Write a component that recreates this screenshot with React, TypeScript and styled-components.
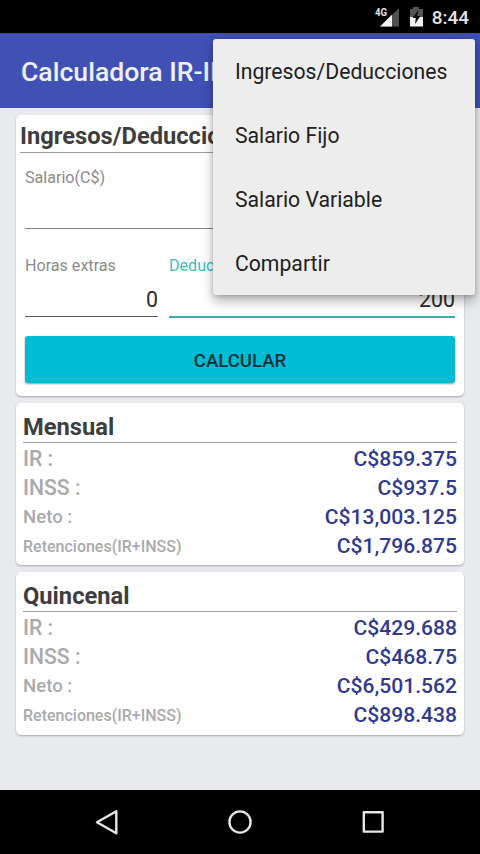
import React from "react";
import styled, { createGlobalStyle } from "styled-components";

const GlobalStyle = createGlobalStyle`
  * { box-sizing: border-box; }
  body { margin: 0; font-family: Roboto, sans-serif; background: #000; }
`;

const Screen = styled.div`
  position: relative;
  width: 480px;
  height: 854px;
  display: flex;
  flex-direction: column;
  overflow: hidden;
  background: #e8eaee;
`;

const StatusBar = styled.header`
  height: 33px;
  flex: none;
  display: flex;
  justify-content: flex-end;
  align-items: center;
  padding-right: 11px;
  background: #000;
`;

const Clock = styled.span`
  margin-left: 9px;
  font-size: 18.9px;
  font-weight: 500;
  line-height: 33px;
  padding-top: 2px;
  color: #e4e4e4;
`;

const Network = styled.text`
  font: 700 11px Roboto, sans-serif;
  fill: #e2e2e2;
`;

const AppBar = styled.div`
  height: 75px;
  flex: none;
  display: flex;
  align-items: center;
  padding-left: 21px;
  background: #4050b3;
  border-top: 1px solid #3e4ba0;
`;

const AppTitle = styled.h1`
  margin: 0;
  font-size: 26.6px;
  font-weight: 500;
  white-space: nowrap;
  color: #eef0fc;
`;

const Content = styled.main`
  flex: 1;
  display: flex;
  flex-direction: column;
  gap: 7px;
  padding: 7px 16px 0;
`;

const Card = styled.section<{ $height: number; $form?: boolean }>`
  height: ${(p) => p.$height}px;
  padding: ${(p) => (p.$form ? "6px 4px 0" : "8px 7px 0")};
  background: #fff;
  border-radius: 5px;
  box-shadow: 0 1px 2px rgba(50, 50, 75, 0.38);
`;

const CardTitle = styled.h2<{ $lineHeight: number }>`
  margin: 0;
  height: 32px;
  line-height: ${(p) => p.$lineHeight}px;
  font-size: 23.7px;
  font-weight: 700;
  color: #3e3e3e;
  border-bottom: 1px solid #9c9c9c;
`;

const Form = styled.div`
  padding: 0 5px;
  display: flex;
  flex-direction: column;
`;

const FieldRow = styled.div`
  display: flex;
  gap: 11px;
  margin-top: 27px;
`;

const Field = styled.label<{ $width?: number; $active?: boolean }>`
  ${(p) => (p.$width ? `width: ${p.$width}px;` : "flex: 1;")}
  display: flex;
  flex-direction: column;
  font-size: 16.1px;
  line-height: 20px;
  white-space: nowrap;
  color: ${(p) => (p.$active ? "#35bfc7" : "#8b8b8b")};
`;

const SalaryField = styled(Field)`
  flex: none;
  margin-top: 15px;
`;

const FieldValue = styled.span<{ $height: number; $line: string }>`
  height: ${(p) => p.$height}px;
  padding-top: 10px;
  line-height: 27px;
  text-align: right;
  font-size: 21.3px;
  color: #2b2b2b;
  border-bottom: ${(p) => p.$line};
`;

const Calculate = styled.button`
  height: 47px;
  margin-top: 18px;
  padding: 2px 0 0;
  border: 0;
  border-radius: 3px;
  background: #00bcd5;
  box-shadow: 0 1px 2px rgba(0, 0, 0, 0.4);
  color: #13323a;
  font: 500 18.6px Roboto, sans-serif;
`;

const ResultRow = styled.div`
  height: 29px;
  display: flex;
  justify-content: space-between;
  align-items: center;
`;

const ResultLabel = styled.span<{ $size: number }>`
  padding-top: ${(p) => (p.$size < 18 ? 2 : 0)}px;
  font-size: ${(p) => p.$size}px;
  font-weight: 500;
  color: #aaa;
`;

const ResultValue = styled.span`
  font-size: 21.1px;
  font-weight: 500;
  color: #303a8f;
`;

const Results = styled.div<{ $gap: number }>`
  padding-top: ${(p) => p.$gap}px;
`;

const Menu = styled.nav`
  position: absolute;
  left: 213px;
  top: 39px;
  width: 262px;
  height: 256px;
  display: flex;
  flex-direction: column;
  background: #ededed;
  border-radius: 3px;
  box-shadow: 0 7px 12px rgba(0, 0, 0, 0.26), 0 1px 5px rgba(0, 0, 0, 0.22);
`;

const MenuItem = styled.a`
  height: 64px;
  padding: 0 22px;
  line-height: 65px;
  font-size: 21.2px;
  color: #212121;
`;

const NavBar = styled.footer`
  height: 64px;
  flex: none;
  display: flex;
  justify-content: space-between;
  align-items: center;
  padding: 0 91px;
  background: #000;
`;

const labelSizes = [21.2, 21.2, 18.6, 16];
const labels = ["IR :", "INSS :", "Neto :", "Retenciones(IR+INSS)"];
const menuItems = ["Ingresos/Deducciones", "Salario Fijo", "Salario Variable", "Compartir"];

interface ResultCardProps {
  title: string;
  values: string[];
  height: number;
  gap: number;
}

function ResultCard({ title, values, height, gap }: ResultCardProps) {
  return (
    <Card $height={height}>
      <CardTitle $lineHeight={32}>{title}</CardTitle>
      <Results $gap={gap}>
        {values.map((value, i) => (
          <ResultRow key={labels[i]}>
            <ResultLabel $size={labelSizes[i]}>{labels[i]}</ResultLabel>
            <ResultValue>{value}</ResultValue>
          </ResultRow>
        ))}
      </Results>
    </Card>
  );
}

export default function App() {
  return (
    <Screen>
      <GlobalStyle />
      <StatusBar>
        <svg width="48" height="33" viewBox="0 0 48 33">
          <path d="M24 8v18.5H5z" fill="#505050" />
          <path d="M17 14.8v11.7H5z" fill="#f4f4f4" />
          <Network x="0" y="16" textLength="12" lengthAdjust="spacingAndGlyphs">4G</Network>
          <path d="M35 9h3V7h6v2h4v8H35z" fill="#555" />
          <path d="M35 17h13v9.5H35z" fill="#f4f4f4" />
          <path d="M43 10l-5.5 8h3.3l-.8 6 5.5-8h-3.2z" fill="#111" />
        </svg>
        <Clock>8:44</Clock>
      </StatusBar>
      <AppBar>
        <AppTitle>Calculadora IR-INSS</AppTitle>
      </AppBar>
      <Content>
        <Card $height={281} $form>
          <CardTitle $lineHeight={31}>Ingresos/Deducciones</CardTitle>
          <Form>
            <SalaryField>
              Salario(C$)
              <FieldValue $height={41} $line="1px solid #858585" />
            </SalaryField>
            <FieldRow>
              <Field $width={133}>
                Horas extras
                <FieldValue $height={41} $line="1px solid #5c5c5c">0</FieldValue>
              </Field>
              <Field $active>
                Deducciones
                <FieldValue $height={42} $line="2px solid #35aeb4">200</FieldValue>
              </Field>
            </FieldRow>
            <Calculate>CALCULAR</Calculate>
          </Form>
        </Card>
        <ResultCard
          title="Mensual"
          height={162}
          gap={1}
          values={["C$859.375", "C$937.5", "C$13,003.125", "C$1,796.875"]}
        />
        <ResultCard
          title="Quincenal"
          height={163}
          gap={1}
          values={["C$429.688", "C$468.75", "C$6,501.562", "C$898.438"]}
        />
      </Content>
      <NavBar>
        <svg width="30" height="30" viewBox="0 0 30 30" fill="none" stroke="#e6e6e6" strokeWidth="2.4" strokeLinejoin="round">
          <path d="M25.3 4.2v22L6 15.2z" />
        </svg>
        <svg width="30" height="30" viewBox="0 0 30 30" fill="none" stroke="#e6e6e6" strokeWidth="2.4">
          <circle cx="15" cy="15" r="10.6" />
        </svg>
        <svg width="30" height="30" viewBox="0 0 30 30" fill="none" stroke="#e6e6e6" strokeWidth="2.4" strokeLinejoin="round">
          <rect x="4.8" y="5.2" width="18.8" height="19.4" />
        </svg>
      </NavBar>
      <Menu>
        {menuItems.map((item) => (
          <MenuItem key={item}>{item}</MenuItem>
        ))}
      </Menu>
    </Screen>
  );
}
